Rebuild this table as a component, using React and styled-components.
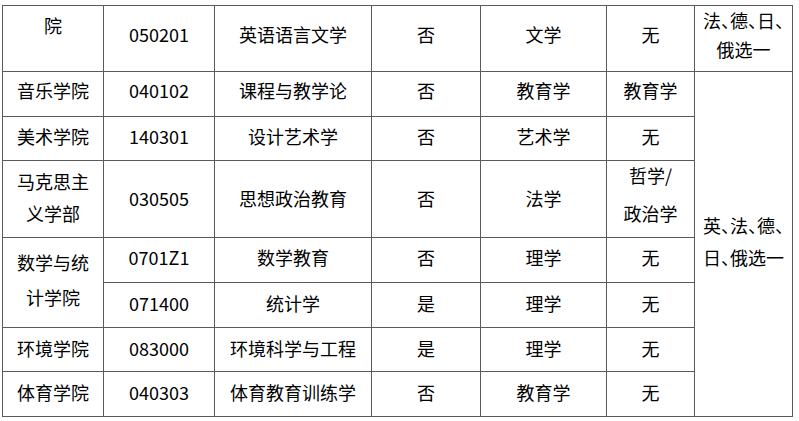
import React from 'react';
import styled, { createGlobalStyle } from 'styled-components';

const Global = createGlobalStyle`
  html, body { margin: 0; padding: 0; background: #fff; }
  body { font-family: "Noto Sans CJK SC", "Noto Sans", sans-serif; }
`;

const Page = styled.div`
  padding: 5px 0 0 2px;
`;

const Grid = styled.div`
  display: grid;
  width: max-content;
  grid-template-columns: 100px 110px 156px 108px 125px 87px 97px;
  grid-template-rows: 65px 44px 43px 76px 44px 44px 43px 44px;
  gap: 1px;
  padding: 1px;
  background: #5a5a5a;
`;

const Cell = styled.div`
  background: #fff;
  display: flex;
  flex-direction: column;
  justify-content: ${(p) => (p.$top ? 'flex-start' : 'center')};
  align-items: center;
  text-align: center;
  white-space: nowrap;
  font-size: 18px;
  line-height: ${(p) => p.$lh || 26}px;
  color: #000;
  padding-top: ${(p) => p.$pt || 0}px;
  padding-bottom: ${(p) => p.$pb || 0}px;
  grid-row: ${(p) => (p.$rows ? `span ${p.$rows}` : 'auto')};
  box-sizing: border-box;
`;

const Line = styled.div``;

const Punct = styled.span`
  letter-spacing: -0.5em;
`;

const renderLine = (s) =>
  s.split(/(、)/).filter(Boolean).map((seg, i) =>
    seg === '、' ? <Punct key={i}>、</Punct> : <React.Fragment key={i}>{seg}</React.Fragment>
  );

const rows = [
  {
    pb: 10,
    cells: [
      { t: ['院'], top: true, pt: 4, lh: 30, pb: 0 },
      { t: ['050201'] },
      { t: ['英语语言文学'] },
      { t: ['否'] },
      { t: ['文学'] },
      { t: ['无'] },
      { t: ['法、德、日、', '俄选一'], top: true, lh: 29, pb: 0 },
    ],
  },
  {
    pb: 9,
    cells: [
      { t: ['音乐学院'] },
      { t: ['040102'] },
      { t: ['课程与教学论'] },
      { t: ['否'] },
      { t: ['教育学'] },
      { t: ['教育学'] },
      { t: ['英、法、德、', '日、俄选一'], rows: 7, lh: 32, pb: 6 },
    ],
  },
  {
    pb: 5,
    cells: [
      { t: ['美术学院'] },
      { t: ['140301'] },
      { t: ['设计艺术学'] },
      { t: ['否'] },
      { t: ['艺术学'] },
      { t: ['无'] },
    ],
  },
  {
    pb: 3,
    cells: [
      { t: ['马克思主', '义学部'], lh: 32, pb: 4 },
      { t: ['030505'] },
      { t: ['思想政治教育'] },
      { t: ['否'] },
      { t: ['法学'] },
      { t: ['哲学/', '政治学'], lh: 38, pb: 11 },
    ],
  },
  {
    pb: 7,
    cells: [
      { t: ['数学与统', '计学院'], rows: 2, lh: 35, pb: 5 },
      { t: ['0701Z1'] },
      { t: ['数学教育'] },
      { t: ['否'] },
      { t: ['理学'] },
      { t: ['无'] },
    ],
  },
  {
    pb: 4,
    cells: [
      { t: ['071400'] },
      { t: ['统计学'] },
      { t: ['是'] },
      { t: ['理学'] },
      { t: ['无'] },
    ],
  },
  {
    pb: 3,
    cells: [
      { t: ['环境学院'] },
      { t: ['083000'] },
      { t: ['环境科学与工程'] },
      { t: ['是'] },
      { t: ['理学'] },
      { t: ['无'] },
    ],
  },
  {
    pb: 4,
    cells: [
      { t: ['体育学院'] },
      { t: ['040303'] },
      { t: ['体育教育训练学'] },
      { t: ['否'] },
      { t: ['教育学'] },
      { t: ['无'] },
    ],
  },
];

export default function App() {
  return (
    <>
      <Global />
      <Page>
        <Grid>
          {rows.map((row, ri) =>
            row.cells.map((c, ci) => (
              <Cell
                key={`${ri}-${ci}`}
                $top={c.top}
                $lh={c.lh}
                $pt={c.pt}
                $pb={c.pb !== undefined ? c.pb : row.pb}
                $rows={c.rows}
              >
                {c.t.map((l, li) => (
                  <Line key={li}>{renderLine(l)}</Line>
                ))}
              </Cell>
            ))
          )}
        </Grid>
      </Page>
    </>
  );
}
